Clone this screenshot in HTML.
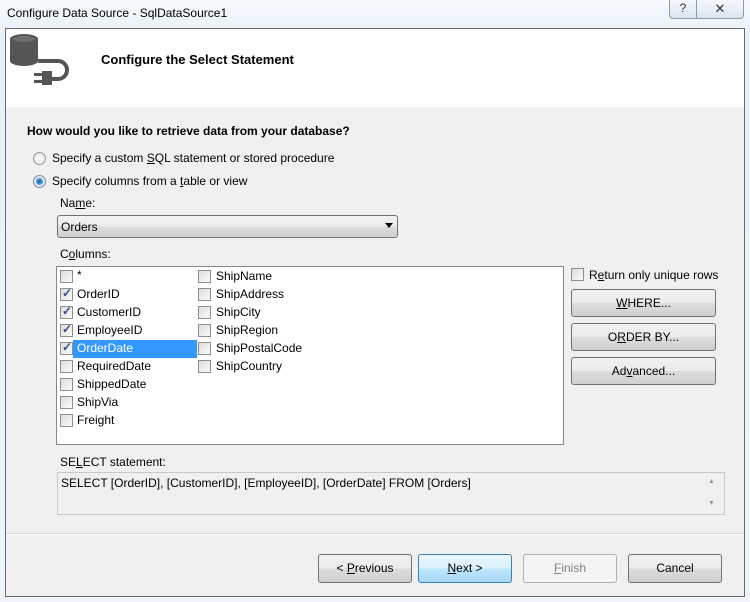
<!DOCTYPE html>
<html><head><style>
*{box-sizing:border-box;margin:0;padding:0}
body{width:750px;height:602px;background:#eef4fa;font-family:"Liberation Sans",sans-serif;font-size:12px;color:#000;position:relative;overflow:hidden}
.a{position:absolute;white-space:nowrap}
.frame{position:absolute;left:0;top:0;width:750px;height:602px;background:linear-gradient(#f6f9fc,#e6f0f9 40px,#eef4fa)}
.client{position:absolute;left:5px;top:28px;width:740px;height:569px;background:#f0f0f0;border:1px solid #6a6a6a}
.hdr{position:absolute;left:0;top:0;width:738px;height:78px;background:#fff}
.btn{position:absolute;border:1px solid #707070;border-radius:3px;background:linear-gradient(#f2f2f2 0,#ebebeb 50%,#dddddd 51%,#cfcfcf 100%);text-align:center;font-size:12px}
.cb{position:absolute;width:13px;height:13px;border:1px solid #8f8f8f;background:linear-gradient(135deg,#dcdcdc,#fbfbfb)}
.ck::after{content:"✓";position:absolute;left:1px;top:-3px;font-size:12px;color:#3b4f82;font-weight:bold}
.it{position:absolute;font-size:12px}
u{text-decoration:underline}
</style></head><body>
<div class="frame"></div>
<div class="a" style="left:7px;top:6px;font-size:12px;color:#000">Configure Data Source - SqlDataSource1</div>
<div class="a" style="left:669px;top:0;width:28px;height:19px;border:1px solid #8a9bb0;border-top:none;border-radius:0 0 0 4px;background:linear-gradient(#f4f8fc,#dae5f1);text-align:center;font-size:12px;line-height:17px;color:#333">?</div>
<div class="a" style="left:696px;top:0;width:48px;height:19px;border:1px solid #8a9bb0;border-top:none;border-radius:0 0 4px 0;background:linear-gradient(#f4f8fc,#dae5f1);text-align:center;font-size:13px;line-height:17px;color:#333">✕</div>
<div class="client">
 <div class="hdr"></div>
</div>
<svg class="a" style="left:8px;top:33px" width="62" height="54" viewBox="0 0 62 54">
 <ellipse cx="16" cy="6" rx="14" ry="5" fill="#555"/>
 <rect x="2" y="6" width="28" height="22" fill="#555"/>
 <ellipse cx="16" cy="28" rx="14" ry="5" fill="#555"/>
 <ellipse cx="16" cy="6" rx="11" ry="3" fill="#6e6e6e"/>
 <path d="M30 28 H50 A9 9 0 0 1 50 46 H44" stroke="#555" stroke-width="4" fill="none"/>
 <rect x="34" y="38" width="10" height="14" fill="#555"/>
 <rect x="26" y="40" width="8" height="3" fill="#555"/>
 <rect x="26" y="47" width="8" height="3" fill="#555"/>
</svg>
<div class="a" style="left:101px;top:52px;font-size:13px;font-weight:bold">Configure the Select Statement</div>
<div class="a" style="left:27px;top:124px;font-weight:bold">How would you like to retrieve data from your database?</div>
<div class="a" style="left:33px;top:152px;width:13px;height:13px;border-radius:50%;border:1px solid #999;background:radial-gradient(#fff,#ddd)"></div>
<div class="a" style="left:52px;top:151px">Specify a custom <u>S</u>QL statement or stored procedure</div>
<div class="a" style="left:33px;top:175px;width:13px;height:13px;border-radius:50%;border:1px solid #7a8ea7;background:radial-gradient(circle,#1e5fa8 0,#4c9ae0 3px,#eef 4px,#ddd 6px)"></div>
<div class="a" style="left:52px;top:174px">Specify columns from a <u>t</u>able or view</div>
<div class="a" style="left:60px;top:196px">Na<u>m</u>e:</div>
<div class="a" style="left:57px;top:215px;width:341px;height:23px;border:1px solid #707070;border-radius:3px;background:linear-gradient(#f2f2f2,#ebebeb 50%,#ddd 51%,#cfcfcf)"></div>
<div class="a" style="left:61px;top:220px">Orders</div>
<div class="a" style="left:385px;top:223px;width:0;height:0;border-left:4px solid transparent;border-right:4px solid transparent;border-top:5px solid #000"></div>
<div class="a" style="left:60px;top:247px">C<u>o</u>lumns:</div>
<div class="a" style="left:56px;top:266px;width:508px;height:179px;border:1px solid #828790;background:#fff"></div>
<div class="a" style="left:73px;top:340px;width:124px;height:18px;background:#3399ff"></div>
<div class="cb" style="left:60px;top:270px"></div><div class="it a" style="left:77px;top:268px">*</div>
<div class="cb ck" style="left:60px;top:288px"></div><div class="it a" style="left:77px;top:287px">OrderID</div>
<div class="cb ck" style="left:60px;top:306px"></div><div class="it a" style="left:77px;top:305px">CustomerID</div>
<div class="cb ck" style="left:60px;top:324px"></div><div class="it a" style="left:77px;top:323px">EmployeeID</div>
<div class="cb ck" style="left:60px;top:342px"></div><div class="it a" style="left:77px;top:341px;color:#fff">OrderDate</div>
<div class="cb" style="left:60px;top:360px"></div><div class="it a" style="left:77px;top:359px">RequiredDate</div>
<div class="cb" style="left:60px;top:378px"></div><div class="it a" style="left:77px;top:377px">ShippedDate</div>
<div class="cb" style="left:60px;top:396px"></div><div class="it a" style="left:77px;top:395px">ShipVia</div>
<div class="cb" style="left:60px;top:414px"></div><div class="it a" style="left:77px;top:413px">Freight</div>
<div class="cb" style="left:198px;top:270px"></div><div class="it a" style="left:216px;top:269px">ShipName</div>
<div class="cb" style="left:198px;top:288px"></div><div class="it a" style="left:216px;top:287px">ShipAddress</div>
<div class="cb" style="left:198px;top:306px"></div><div class="it a" style="left:216px;top:305px">ShipCity</div>
<div class="cb" style="left:198px;top:324px"></div><div class="it a" style="left:216px;top:323px">ShipRegion</div>
<div class="cb" style="left:198px;top:342px"></div><div class="it a" style="left:216px;top:341px">ShipPostalCode</div>
<div class="cb" style="left:198px;top:360px"></div><div class="it a" style="left:216px;top:359px">ShipCountry</div>
<div class="cb" style="left:571px;top:268px"></div><div class="a" style="left:589px;top:268px">R<u>e</u>turn only unique rows</div>
<div class="btn" style="left:571px;top:289px;width:145px;height:28px;line-height:26px"><u>W</u>HERE...</div>
<div class="btn" style="left:571px;top:323px;width:145px;height:28px;line-height:26px">O<u>R</u>DER BY...</div>
<div class="btn" style="left:571px;top:357px;width:145px;height:28px;line-height:26px">Ad<u>v</u>anced...</div>
<div class="a" style="left:60px;top:455px">SE<u>L</u>ECT statement:</div>
<div class="a" style="left:57px;top:472px;width:668px;height:43px;border:1px solid #c8c8c8;background:#f0f0f0"></div>
<div class="a" style="left:61px;top:476px">SELECT [OrderID], [CustomerID], [EmployeeID], [OrderDate] FROM [Orders]</div>
<div class="a" style="left:708px;top:478px;font-size:7px;color:#999">▲</div>
<div class="a" style="left:708px;top:500px;font-size:7px;color:#999">▼</div>
<div class="a" style="left:6px;top:533px;width:738px;height:1px;background:#d8d8d8"></div>
<div class="a" style="left:6px;top:534px;width:738px;height:1px;background:#fff"></div>
<div class="btn" style="left:318px;top:554px;width:94px;height:29px;line-height:27px">&lt; <u>P</u>revious</div>
<div class="btn" style="left:418px;top:554px;width:94px;height:29px;line-height:27px;border-color:#3c7fb1;background:linear-gradient(#eaf6fd,#d9f0fc 50%,#bee6fd 51%,#a7d9f5)"><u>N</u>ext &gt;</div>
<div class="btn" style="left:523px;top:554px;width:94px;height:29px;line-height:27px;border-color:#adb2b5;background:#f4f4f4;color:#838383"><u>F</u>inish</div>
<div class="btn" style="left:628px;top:554px;width:94px;height:29px;line-height:27px">Cancel</div>
</body></html>
